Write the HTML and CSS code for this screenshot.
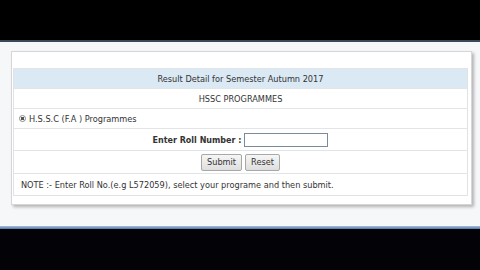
FILE: index.html
```html
<!DOCTYPE html>
<html>
<head>
<meta charset="utf-8">
<link rel="stylesheet" href="styles.css">
</head>
<body>
<div class="top"></div>
<div class="rule"></div>
<div class="main">
  <div class="card">
    <table class="result">
      <tr class="head"><td>Result Detail for Semester Autumn 2017</td></tr>
      <tr class="r20"><td class="center">HSSC PROGRAMMES</td></tr>
      <tr class="r20"><td class="left"><span class="radio"></span>H.S.S.C (F.A ) Programmes</td></tr>
      <tr class="r22"><td class="center"><span class="lbl">Enter Roll Number :</span><span class="inp"></span></td></tr>
      <tr class="r23"><td class="center"><span class="btn">Submit</span><span class="btn">Reset</span></td></tr>
      <tr class="r22"><td class="note">NOTE :- Enter Roll No.(e.g L572059), select your programe and then submit.</td></tr>
    </table>
  </div>
</div>
<div class="bline"></div>
<div class="bottom"></div>
</body>
</html>
```
FILE: styles.css
```css
html, body { margin: 0; padding: 0; }
body { width: 480px; height: 270px; background: #000; overflow: hidden; font-family: "DejaVu Sans", Verdana, sans-serif; font-size: 8.2px; color: #333; }
.top { height: 40px; background: #000; }
.rule { height: 2px; background: #3b4957; }
.main { height: 184px; background: #f6f7f9; padding: 9px 0 0 11px; box-sizing: border-box; }
.card { width: 461px; height: 154px; background: #fff; border: 1px solid #d6d6d6; box-sizing: border-box; box-shadow: 2px 2px 3px rgba(0,0,0,0.28); padding: 16px 3px 0 1px; }
.result { width: 455px; border-collapse: collapse; border: 1px solid #dfe3e6; }
.result td { border-top: 1px solid #e2e5e8; padding: 0; }
.head td { height: 19px; background: #dae9f3; text-align: center; }
.r20 td { height: 19px; }
.r22 td { height: 21px; }
.r23 td { height: 22px; }
.center { text-align: center; }
.left { padding-left: 5px !important; }
.radio { display: inline-block; width: 5px; height: 5px; border: 1px solid #888; border-radius: 50%; margin-right: 3px; vertical-align: middle; position: relative; top: -1px; background: radial-gradient(circle, #555 40%, #fff 50%); }
.lbl { font-weight: bold; font-size: 8px; }
.inp { display: inline-block; width: 84px; height: 14px; border: 1px solid #7a8ba0; vertical-align: middle; margin-left: 3px; box-sizing: border-box; }
.btn { display: inline-block; padding: 2px 5px; border: 1px solid #a8a8a8; border-radius: 2px; background: linear-gradient(#f6f6f6, #dedede); margin: 0 1.5px; line-height: 11px; }
.note { padding-left: 7px !important; }
.bline { height: 3px; background: linear-gradient(#a9bfdc, #5575a8); }
.bottom { height: 41px; background: #030207; }
```
